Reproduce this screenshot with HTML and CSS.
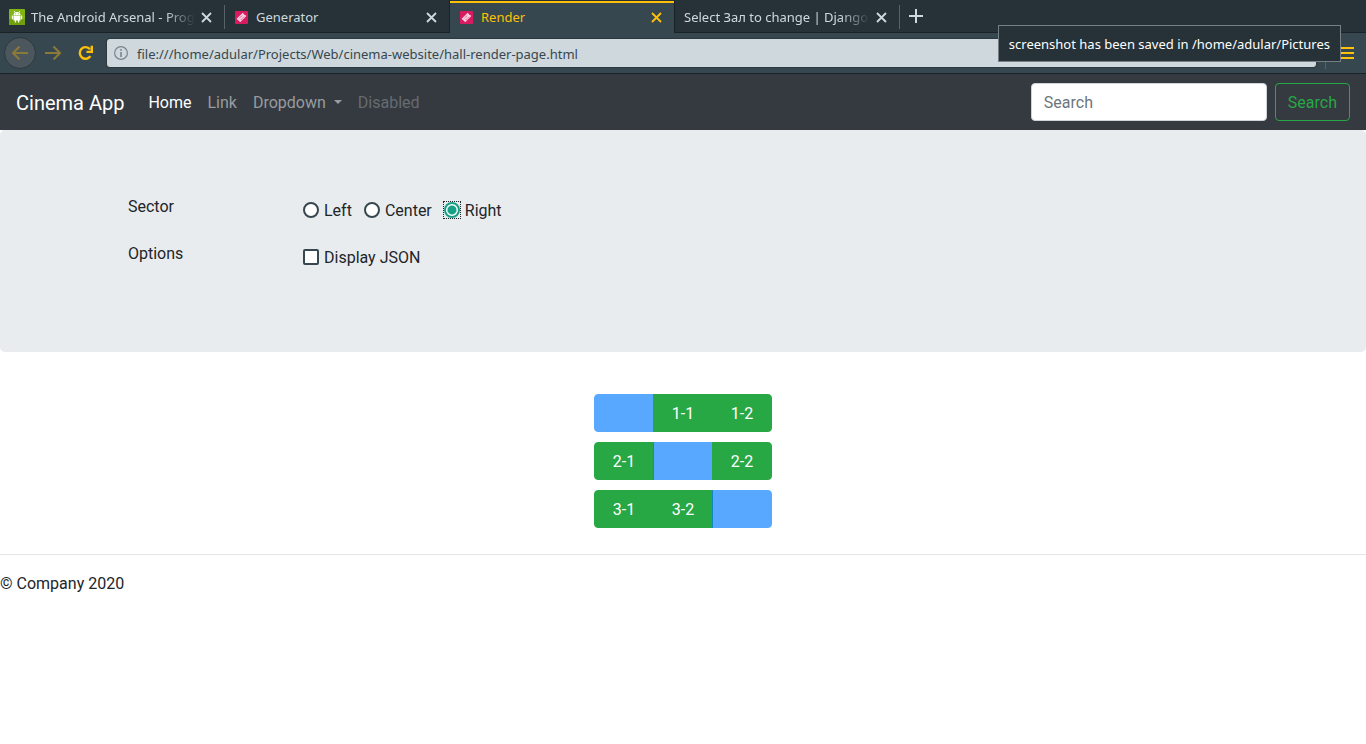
FILE: index.html
```html
<!DOCTYPE html>
<html lang="en">
<head>
<meta charset="utf-8">
<title>Render</title>
<link rel="stylesheet" href="styles.css">
</head>
<body>
<svg class="sprite" aria-hidden="true">
  <symbol id="close" viewBox="0 0 11 11"><path d="M1 1l9 9M10 1l-9 9" fill="none" stroke="currentColor" stroke-width="1.8"/></symbol>
  <symbol id="ticket" viewBox="0 0 13 13">
    <rect width="13" height="13" rx="1" fill="#d81b60"/>
    <path d="M1.6 7.8L7.8 1.800l1 1.100q.2 1 1.300 1.200l1.200 1L5.200 11.200 4.100 10.100q-.2-1-1.300-1.200z" fill="#fbd3e1"/>
    <path d="M4.200 7.400l3.200-3.200M5.800 8.900l3.200-3.200" stroke="#d81b60" stroke-width=".8" stroke-dasharray="1.500 .6"/>
  </symbol>
</svg>
<header class="browser">
  <div class="tabs">
    <div class="tab">
      <svg class="favicon-large" viewBox="0 0 16 16"><rect width="16" height="16" rx="1" fill="#82b414"/><path d="M0 10h16v5q0 1-1 1H1q-1 0-1-1z" fill="#6fa00c"/><path d="M4.5 6a3.5 3 0 0 1 7 0zM4.5 6.6h7v4.9h-7zM2.8 6.6h1.1v3.6H2.8zM12.1 6.6h1.1v3.6h-1.1zM5.8 11h1.3v2.4H5.8zM8.9 11h1.3v2.4H8.9z" fill="#fff"/><path d="M5.2 2l1 1.6M10.8 2l-1 1.6" stroke="#fff" stroke-width=".8"/><path d="M6.1 4.5h.9v.8h-.9zM9 4.5h.9v.8H9z" fill="#82b414"/></svg>
      <span class="tab-title tab-title-faded">The Android Arsenal - Prog</span>
      <button class="tab-close" aria-label="Close tab"><svg><use href="#close"/></svg></button>
    </div>
    <div class="tab tab-short">
      <svg class="favicon"><use href="#ticket"/></svg>
      <span class="tab-title">Generator</span>
      <button class="tab-close" aria-label="Close tab"><svg><use href="#close"/></svg></button>
    </div>
    <div class="tab tab-short tab-active">
      <svg class="favicon"><use href="#ticket"/></svg>
      <span class="tab-title">Render</span>
      <button class="tab-close" aria-label="Close tab"><svg><use href="#close"/></svg></button>
    </div>
    <div class="tab">
      <span class="tab-title tab-title-faded">Select Зал to change | Django</span>
      <button class="tab-close" aria-label="Close tab"><svg><use href="#close"/></svg></button>
    </div>
    <button class="new-tab" aria-label="New tab"><svg viewBox="0 0 14 14"><path d="M7 0v14M0 7h14" stroke="currentColor" stroke-width="2"/></svg></button>
  </div>
  <div class="toolbar">
    <button class="back" aria-label="Back"><svg viewBox="0 0 16 14"><path d="M16 7H1M7.5.5L1 7l6.500 6.500" fill="none" stroke="currentColor" stroke-width="2"/></svg></button>
    <button class="forward" aria-label="Forward"><svg viewBox="0 0 16 14"><path d="M0 7h15M8.500.5L15 7l-6.500 6.500" fill="none" stroke="currentColor" stroke-width="2"/></svg></button>
    <button class="reload" aria-label="Reload"><svg viewBox="0 0 16 16"><path d="M12.400 11.200A5.800 5.800 0 1 1 12 4.200" fill="none" stroke="currentColor" stroke-width="2.400"/><path d="M13.800.8v6.100H8.500" fill="none" stroke="currentColor" stroke-width="2.400"/></svg></button>
    <div class="address">
      <svg viewBox="0 0 14 14"><circle cx="7" cy="7" r="6.400" fill="none" stroke="currentColor" stroke-width="1.200"/><path d="M7 6v5M7 3v1.700" stroke="currentColor" stroke-width="1.600"/></svg>
      <input type="text" aria-label="Address" value="file:///home/adular/Projects/Web/cinema-website/hall-render-page.html">
    </div>
    <span class="divider"></span>
    <button class="menu" aria-label="Menu"><svg viewBox="0 0 14 12"><path d="M0 1h14M0 6h14M0 11h14" stroke="currentColor" stroke-width="2"/></svg></button>
  </div>
  <div class="notice" role="status">screenshot has been saved in /home/adular/Pictures</div>
</header>
<nav class="navbar">
  <a class="brand" href="#">Cinema App</a>
  <div class="links">
    <a class="link link-active" href="#">Home</a>
    <a class="link" href="#">Link</a>
    <a class="link dropdown" href="#">Dropdown</a>
    <a class="link link-disabled" href="#" aria-disabled="true">Disabled</a>
  </div>
  <form class="search">
    <input class="search-input" type="search" placeholder="Search" aria-label="Search">
    <button class="search-button" type="button">Search</button>
  </form>
</nav>
<main>
  <section class="panel">
    <form class="options">
      <div class="row" role="radiogroup" aria-labelledby="sector">
        <span class="row-label" id="sector">Sector</span>
        <div class="choices">
          <label class="choice"><span class="control"><input type="radio" name="sector"></span>Left</label>
          <label class="choice"><span class="control"><input type="radio" name="sector"></span>Center</label>
          <label class="choice"><span class="control control-focused"><input type="radio" name="sector" checked></span>Right</label>
        </div>
      </div>
      <div class="row" role="group" aria-labelledby="options">
        <span class="row-label" id="options">Options</span>
        <div class="choices">
          <label class="choice"><span class="control"><input type="checkbox"></span>Display JSON</label>
        </div>
      </div>
    </form>
  </section>
  <section class="hall">
    <div class="seats">
      <button class="seat seat-empty" disabled aria-label="No seat"></button><button class="seat">1-1</button><button class="seat">1-2</button>
    </div>
    <div class="seats">
      <button class="seat">2-1</button><button class="seat seat-empty" disabled aria-label="No seat"></button><button class="seat">2-2</button>
    </div>
    <div class="seats">
      <button class="seat">3-1</button><button class="seat">3-2</button><button class="seat seat-empty" disabled aria-label="No seat"></button>
    </div>
  </section>
</main>
<footer class="footer">© Company 2020</footer>
</body>
</html>
```
FILE: styles.css
```css
*, *::before, *::after { box-sizing: border-box; }
body {
  margin: 0;
  font: 16px/24px Roboto, sans-serif;
  color: #212529;
  background: #fff;
}
button, input { margin: 0; font: inherit; }
a { text-decoration: none; }
.sprite { position: absolute; width: 0; height: 0; }

.browser {
  position: relative;
  font: 13px/18px "Noto Sans", sans-serif;
  background: #37474f;
}
.browser svg { display: block; flex: none; }
.browser button {
  display: flex;
  flex: none;
  align-items: center;
  justify-content: center;
  padding: 0;
  border: 0;
  background: none;
  color: inherit;
}
.tabs {
  display: flex;
  height: 33px;
  background: #263238;
  color: #cfd8dc;
}
.tab {
  position: relative;
  display: flex;
  align-items: center;
  flex: 0 1 225px;
  min-width: 0;
  padding: 2px 13px 0 9px;
  border-bottom: 1px solid #1a2327;
}
.tab::after {
  content: "";
  position: absolute;
  top: 5px;
  right: 0;
  width: 1px;
  height: 24px;
  background: #56636a;
}
.tab-short { padding-left: 10px; }
.tab-short::after { top: 0; height: 33px; background: #1a2327; }
.tab-active {
  border-bottom-color: #37474f;
  background: linear-gradient(#263238 1px, #ffc107 1px, #ffc107 3px, #37474f 3px);
  color: #ffc107;
}
.tab-title {
  flex: 1;
  overflow: hidden;
  white-space: nowrap;
}
.tab-title-faded {
  -webkit-mask-image: linear-gradient(to left, transparent, #000 30px);
  mask-image: linear-gradient(to left, transparent, #000 30px);
}
.favicon-large { width: 16px; height: 16px; margin-right: 6px; }
.favicon { width: 13px; height: 13px; margin-right: 8px; }
.tab-close { margin-left: 6px; }
.tab-close svg { width: 11px; height: 11px; }
.browser .new-tab { flex: 1; justify-content: flex-start; padding-left: 9px; border-bottom: 1px solid #1a2327; }
.new-tab svg { width: 14px; height: 14px; }

.toolbar {
  display: flex;
  align-items: center;
  height: 41px;
  padding: 0 12px 0 4px;
  border-bottom: 1px solid #1a2327;
  color: #ffc107;
}
.browser .back {
  width: 32px;
  height: 32px;
  border: 1px solid #2c393f;
  border-radius: 50%;
  background: #4b565d;
  color: #8d7937;
}
.browser .forward { margin-left: 9px; color: #8d7937; }
.browser .reload { margin: 0 13px 0 17px; }
.back svg, .forward svg { width: 16px; height: 14px; }
.reload svg { width: 16px; height: 16px; }
.address {
  display: flex;
  align-items: center;
  flex: 1;
  height: 28px;
  padding: 0 7px;
  border-radius: 3px;
  background: #cfd8dc;
  box-shadow: 0 0 1px 1px #2c393f;
  color: #78858b;
}
.address svg { width: 14px; height: 14px; }
.address input {
  flex: 1;
  min-width: 0;
  margin-left: 9px;
  padding: 2px 0 0;
  border: 0;
  outline: 0;
  background: none;
  color: #37474f;
}
.divider { width: 1px; height: 32px; margin: 0 14px 0 9px; background: #56636a; }
.menu svg { width: 14px; height: 12px; }
.notice {
  position: absolute;
  top: 25px;
  right: 25px;
  padding: 9px 10px 8px;
  border: 1px solid #768084;
  background: #263238;
  color: #fff;
}

.navbar {
  display: flex;
  align-items: center;
  padding: 8px 16px;
  background: #343a40;
}
.brand { margin-right: 16px; padding: 6px 0 4px; font-size: 20px; line-height: 30px; color: #fff; }
.links { display: flex; flex: 1; }
.link { padding: 9px 8px 7px; color: #999c9f; }
.link-active { color: #fff; }
.link-disabled { color: #676b70; }
.dropdown::after {
  content: "";
  display: inline-block;
  margin-left: 8px;
  vertical-align: 4px;
  border: 4px solid transparent;
  border-top-color: currentColor;
  border-bottom: 0;
}
.search { display: flex; gap: 8px; }
.search-input, .search-button { height: 38px; border-radius: 4px; }
.search-input { width: 236px; padding: 6px 12px; border: 1px solid #ced4da; background: #fff; color: #495057; }
.search-input::placeholder { color: #6c757d; opacity: 1; }
.search-button { padding: 7px 12px 5px; border: 1px solid #28a745; background: none; color: #28a745; }

.panel { padding: 64px 32px; border-radius: 5px; background: #e9ecef; }
.options { max-width: 1110px; margin: 0 auto; }
.row { display: grid; grid-template-columns: 175px 1fr; padding-bottom: 16px; }
.row-label { padding-top: 1px; }
.choices { display: flex; gap: 12px; padding: 5px 0 2px; }
.choice { display: flex; align-items: center; }
.control { display: flex; margin: 0 5px 2px 0; }
.control input {
  appearance: none;
  width: 16px;
  height: 16px;
  border: 2px solid #37474f;
  border-radius: 2px;
  outline: 0;
  background: #fff;
}
.control input[type="radio"] { border-radius: 50%; }
.control input[type="radio"]:checked {
  border-color: #16a085;
  background: radial-gradient(circle, #16a085 4px, #fff 5px);
}
.control-focused { outline: 1px dotted #212529; }

.hall { display: grid; justify-content: center; gap: 10px; padding: 42px 0 26px; }
.seats { display: flex; }
.seat {
  position: relative;
  width: 60px;
  height: 38px;
  padding: 7px 0 5px;
  border: 1px solid #28a745;
  background: #28a745;
  color: #fff;
}
.seat + .seat { margin-left: -1px; }
.seat:first-child { border-radius: 4px 0 0 4px; }
.seat:last-child { border-radius: 0 4px 4px 0; }
.seat-empty { border-color: #007bff; background: #007bff; opacity: .65; }
.footer { padding-top: 17px; border-top: 1px solid #e5e5e5; }
```
